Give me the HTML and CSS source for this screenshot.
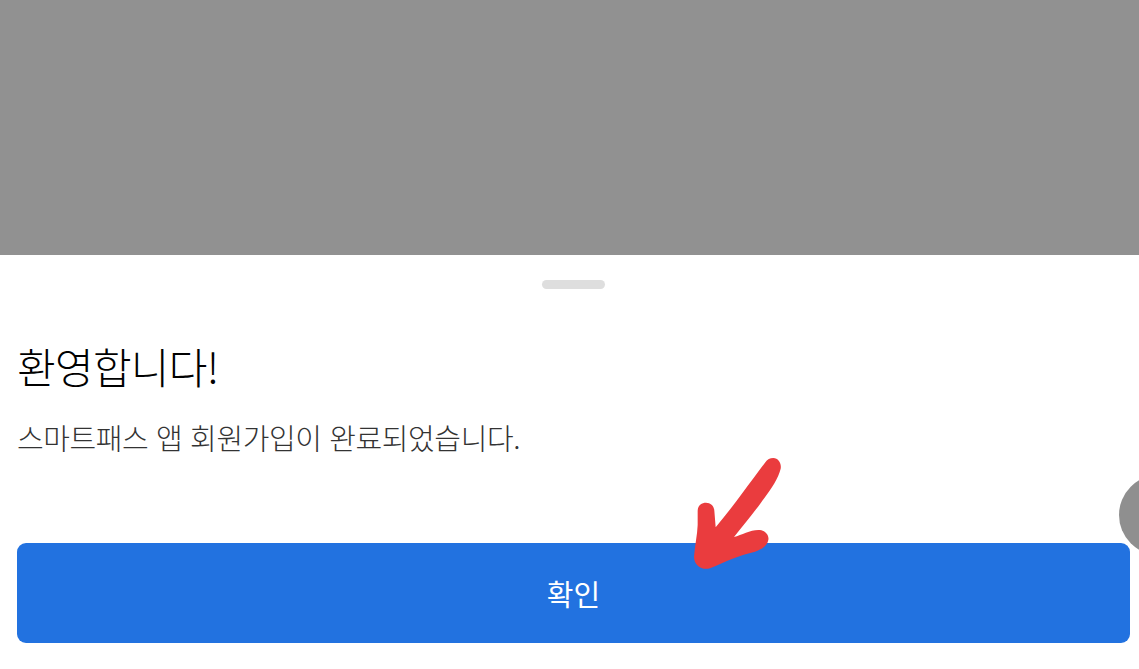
FILE: index.html
```html
<!DOCTYPE html>
<html lang="ko">
<head>
<meta charset="utf-8">
<title>환영합니다</title>
<link rel="stylesheet" href="styles.css">
</head>
<body>
<div class="screen">
  <div class="overlay"></div>
  <section class="sheet">
    <div class="handle-row"><span class="handle"></span></div>
    <h1 class="title">환영합니다!</h1>
    <p class="message">스마트패스 앱 회원가입이 완료되었습니다.</p>
    <button class="confirm" type="button">확인</button>
  </section>
  <div class="float-ball"></div>
  <svg class="arrow" width="150" height="150" viewBox="0 0 450 450" aria-hidden="true">
    <path d="M340 54 C355 54 365 70 362 86 C355 115 335 145 305 185 C280 220 250 255 222 291 C245 285 270 270 295 270 C315 270 328 285 325 300 C322 318 305 328 285 335 C240 345 195 365 150 385 C125 392 102 375 102 350 C104 320 112 285 113 255 L113 212 C114 195 125 188 138 188 C152 188 162 198 163 212 L167 262 C195 228 225 190 250 155 C270 128 295 95 315 68 C322 58 330 54 340 54 Z"/>
  </svg>
</div>
</body>
</html>
```
FILE: styles.css
```css
* { box-sizing: border-box; }
html, body { margin: 0; padding: 0; height: 100%; background: #fff; }
.screen {
  position: relative;
  width: 1139px;
  height: 669px;
  overflow: hidden;
  display: flex;
  flex-direction: column;
  font-family: "Noto Sans CJK KR", "Noto Sans", sans-serif;
}
.overlay { height: 255px; background: #919191; flex: none; }
.sheet {
  flex: 1;
  background: #fff;
  padding: 25px 9px 0 17px;
  display: flex;
  flex-direction: column;
}
.handle-row { display: flex; justify-content: center; }
.handle { width: 63px; height: 9px; border-radius: 5px; background: #dedede; }
.title {
  margin: 48px 0 0;
  font-size: 42px;
  line-height: 58px;
  font-weight: 300;
  color: #000;
  letter-spacing: -0.7px;
}
.message {
  margin: 21px 0 0;
  font-size: 29px;
  line-height: 42px;
  font-weight: 300;
  color: #333;
  letter-spacing: -0.4px;
}
.confirm {
  margin-top: 85px;
  height: 100px;
  width: 100%;
  border: 0;
  border-radius: 9px;
  background: #2272e0;
  color: #fff;
  font: inherit;
  font-size: 29px;
}
.float-ball {
  position: absolute;
  left: 1119px;
  top: 475px;
  width: 80px;
  height: 80px;
  border-radius: 50%;
  background: #8f8f8f;
}
.arrow { position: absolute; left: 660px; top: 440px; pointer-events: none; }
.arrow path { fill: #ea3c3e; }
```
